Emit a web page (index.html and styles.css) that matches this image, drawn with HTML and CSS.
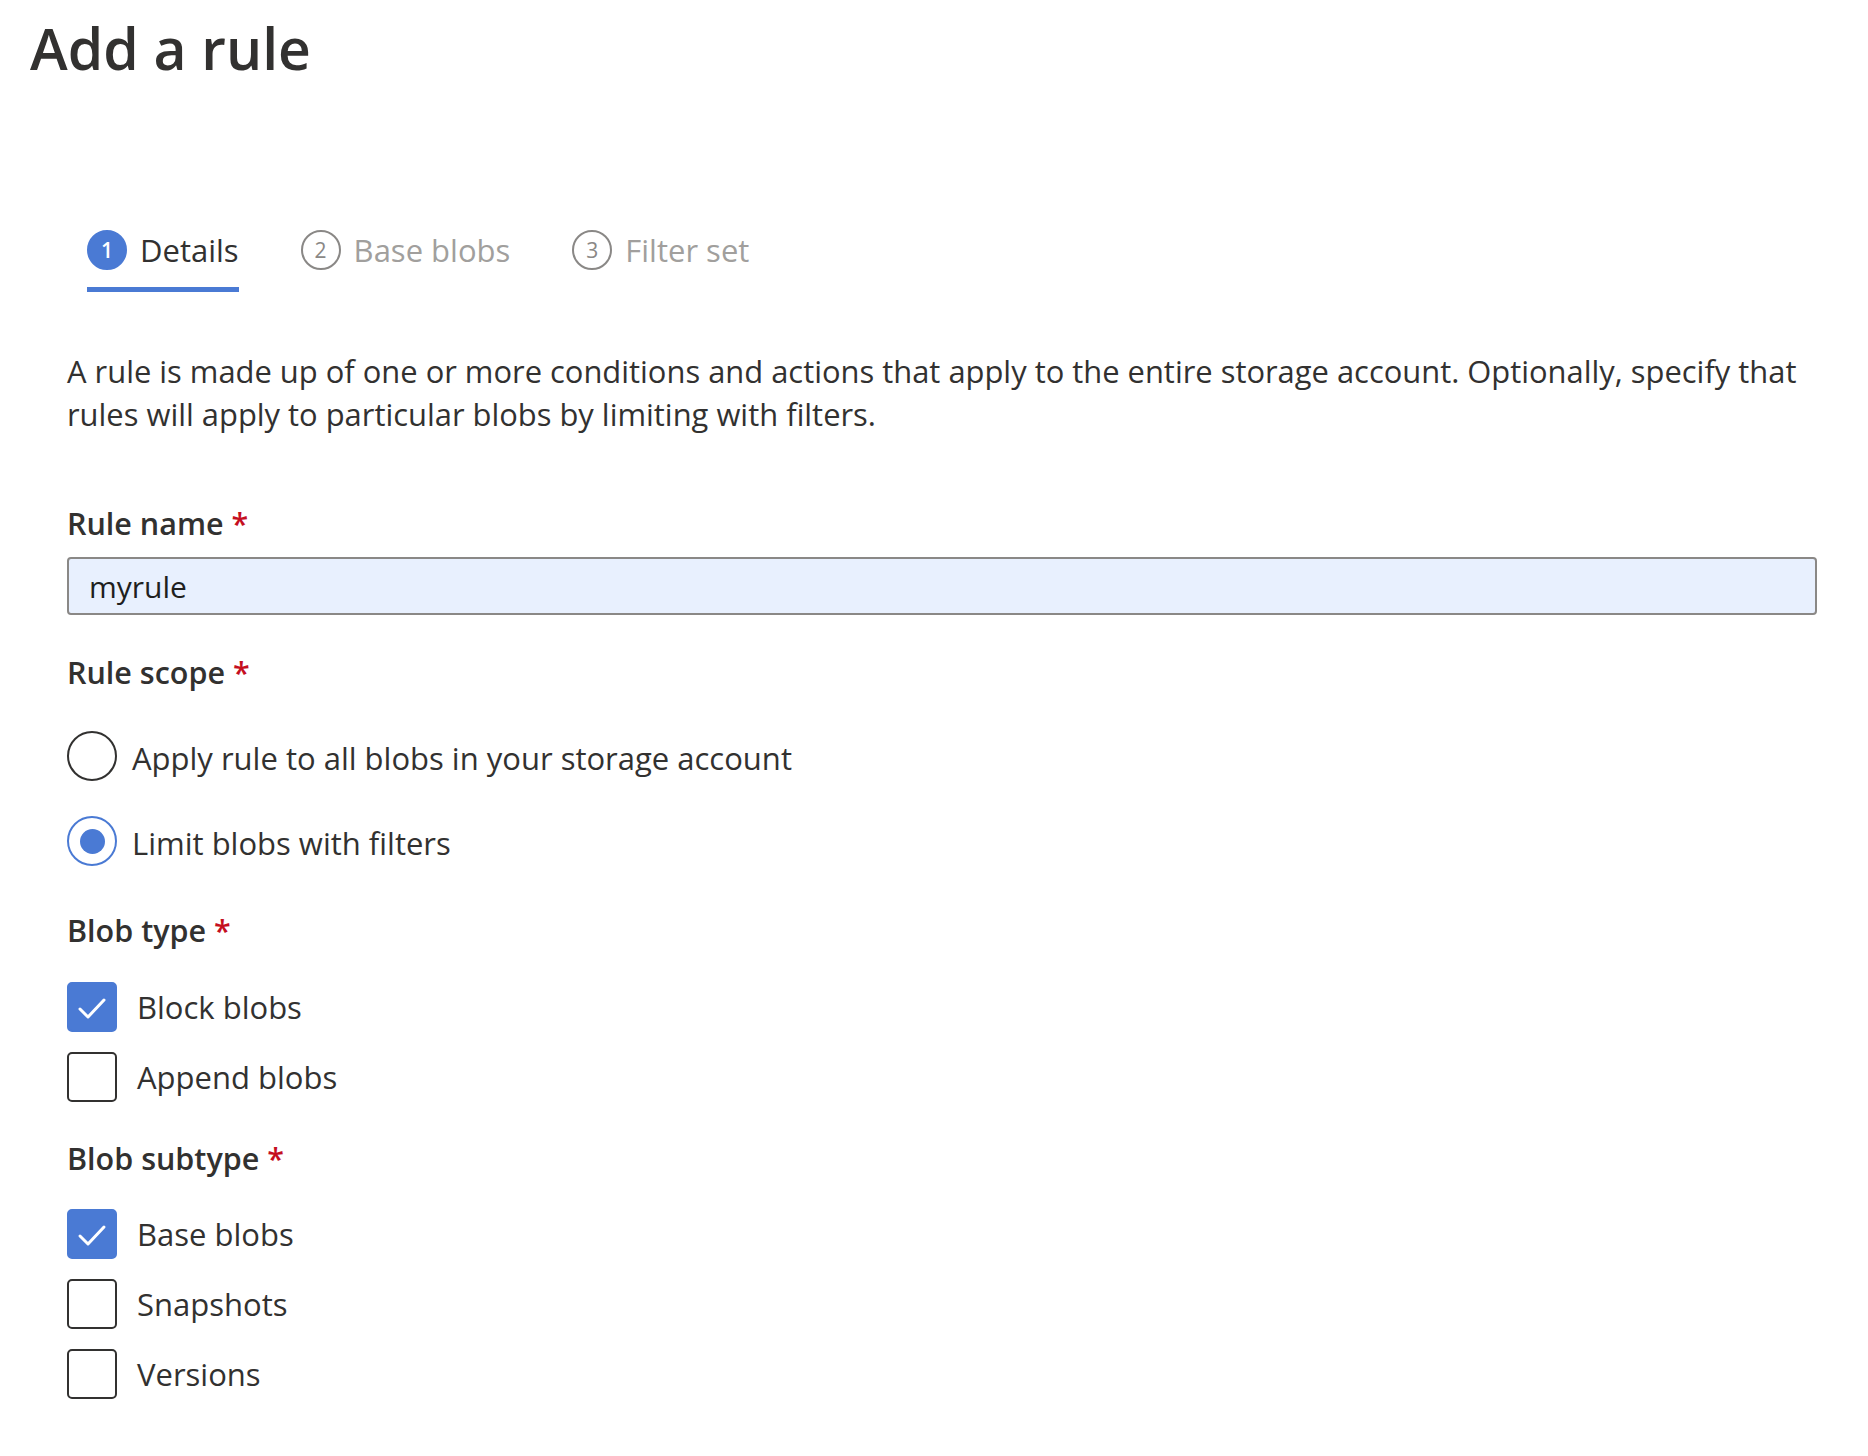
FILE: index.html
```html
<!DOCTYPE html>
<html lang="en">
<head>
<meta charset="utf-8">
<title>Add a rule</title>
<link rel="stylesheet" href="styles.css">
</head>
<body>
<div class="page">
  <h1 class="title">Add a rule</h1>

  <div class="tabs">
    <div class="tab active">
      <span class="step step-active">1</span>
      <span class="tab-label">Details</span>
    </div>
    <div class="tab">
      <span class="step">2</span>
      <span class="tab-label">Base blobs</span>
    </div>
    <div class="tab">
      <span class="step">3</span>
      <span class="tab-label">Filter set</span>
    </div>
  </div>

  <div class="content">
    <p class="desc">A rule is made up of one or more conditions and actions that apply to the entire storage account. Optionally, specify that rules will apply to particular blobs by limiting with filters.</p>

    <div class="label label-name">Rule name <span class="req">*</span></div>
    <div class="input"><span class="input-text">myrule</span></div>

    <div class="label label-scope">Rule scope <span class="req">*</span></div>
    <div class="radios">
      <div class="radio-row">
        <span class="radio"></span>
        <span class="opt">Apply rule to all blobs in your storage account</span>
      </div>
      <div class="radio-row">
        <span class="radio radio-on"><span class="dot"></span></span>
        <span class="opt">Limit blobs with filters</span>
      </div>
    </div>

    <div class="label label-type">Blob type <span class="req">*</span></div>
    <div class="checks checks-type">
      <div class="check-row">
        <span class="box box-on"><svg viewBox="0 0 50 50" width="50" height="50"><polyline points="13,27 21,35 37,18" fill="none" stroke="#fff" stroke-width="3" stroke-linecap="round" stroke-linejoin="round"/></svg></span>
        <span class="opt">Block blobs</span>
      </div>
      <div class="check-row">
        <span class="box"></span>
        <span class="opt">Append blobs</span>
      </div>
    </div>

    <div class="label label-sub">Blob subtype <span class="req">*</span></div>
    <div class="checks checks-sub">
      <div class="check-row">
        <span class="box box-on"><svg viewBox="0 0 50 50" width="50" height="50"><polyline points="13,27 21,35 37,18" fill="none" stroke="#fff" stroke-width="3" stroke-linecap="round" stroke-linejoin="round"/></svg></span>
        <span class="opt">Base blobs</span>
      </div>
      <div class="check-row">
        <span class="box"></span>
        <span class="opt">Snapshots</span>
      </div>
      <div class="check-row">
        <span class="box"></span>
        <span class="opt">Versions</span>
      </div>
    </div>
  </div>
</div>
</body>
</html>
```

FILE: styles.css
```css
* { box-sizing: border-box; }
html, body {
  margin: 0;
  padding: 0;
  background: #ffffff;
}
body {
  font-family: "Open Sans", "Noto Sans", sans-serif;
  color: #323130;
}
.page {
  width: 1868px;
  min-height: 1456px;
}
.title {
  margin: 0;
  padding: 12px 0 0 30px;
  font-size: 57px;
  line-height: 72px;
  font-weight: 600;
  color: #323130;
}
.tabs {
  display: flex;
  gap: 62px;
  margin-top: 146px;
  padding-left: 87px;
}
.tab {
  display: flex;
  align-items: flex-start;
  gap: 13px;
  height: 62px;
  padding-bottom: 22px;
  border-bottom: 5px solid transparent;
}
.tab.active {
  border-bottom-color: #4a7ad4;
}
.step {
  width: 40px;
  height: 40px;
  border-radius: 50%;
  border: 2px solid #8a8886;
  color: #8a8886;
  display: flex;
  align-items: center;
  justify-content: center;
  font-size: 21px;
  line-height: 1;
  flex: none;
}
.step-active {
  background: #4a7ad4;
  border-color: #4a7ad4;
  color: #ffffff;
  font-weight: 600;
}
.tab-label {
  font-size: 31px;
  line-height: 40px;
  color: #a19f9d;
}
.tab.active .tab-label {
  color: #323130;
}
.content {
  padding-left: 67px;
  width: 1817px;
}
.desc {
  margin: 58px 0 0 0;
  font-size: 30.9px;
  line-height: 43px;
  width: 1760px;
}
.label {
  font-size: 30.5px;
  line-height: 43px;
  font-weight: 600;
}
.req {
  color: #c50f1f;
  font-weight: 600;
}
.label-name { margin-top: 66px; }
.label-scope { margin-top: 36px; }
.label-type { margin-top: 43px; }
.label-sub { margin-top: 35px; }
.input {
  margin-top: 12px;
  height: 58px;
  width: 100%;
  background: #e8f0fe;
  border: 2px solid #8a8886;
  border-radius: 4px;
  display: flex;
  align-items: center;
  padding-left: 20px;
}
.input-text {
  font-size: 30px;
  color: #201f1e;
}
.radios {
  margin-top: 37px;
  display: flex;
  flex-direction: column;
  gap: 35px;
}
.radio-row, .check-row {
  display: flex;
  align-items: center;
  height: 50px;
}
.radio-row { gap: 15px; }
.check-row { gap: 20px; }
.radio {
  width: 50px;
  height: 50px;
  border-radius: 50%;
  border: 2px solid #323130;
  display: flex;
  align-items: center;
  justify-content: center;
  flex: none;
}
.radio-on { border-color: #4a7ad4; }
.dot {
  width: 25px;
  height: 25px;
  border-radius: 50%;
  background: #4a7ad4;
}
.opt {
  font-size: 31px;
  line-height: 43px;
  padding-top: 4px;
  color: #323130;
}
.check-row .opt {
  padding-top: 1px;
}
.checks {
  display: flex;
  flex-direction: column;
  gap: 20px;
}
.checks-type { margin-top: 30px; }
.checks-sub { margin-top: 29px; }
.box {
  width: 50px;
  height: 50px;
  border: 2px solid #323130;
  border-radius: 5px;
  flex: none;
  display: flex;
}
.box-on {
  background: #4a7ad4;
  border-color: #4a7ad4;
}
.box svg { display: block; margin: -2px; }
```
